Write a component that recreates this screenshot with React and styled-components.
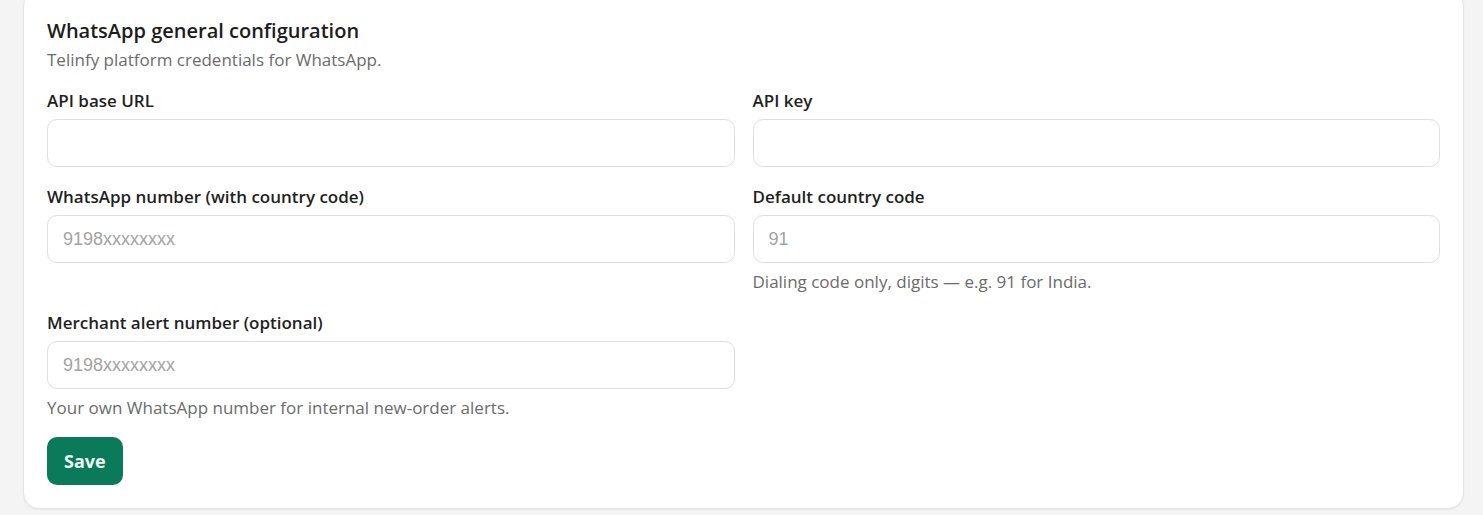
import React from "react";
import styled, { createGlobalStyle } from "styled-components";

const GlobalStyle = createGlobalStyle`
  html, body {
    margin: 0;
    padding: 0;
    background: #f4f4f4;
    font-family: "Open Sans", "Noto Sans", "Liberation Sans", sans-serif;
    color: #1f1f1f;
  }
`;

const Page = styled.div`
  padding: 0 19px 6px 23px;
  overflow: hidden;
`;

const Card = styled.section`
  margin-top: -10px;
  background: #ffffff;
  border: 1px solid #e4e4e4;
  border-radius: 16px;
  box-shadow: 0 1px 2px rgba(0, 0, 0, 0.06);
  padding: 28px 23px 23px;
  display: flex;
  flex-direction: column;
`;

const Title = styled.h2`
  margin: 0;
  font-size: 20px;
  line-height: 24px;
  font-weight: 600;
  color: #1c1c1c;
`;

const Subtitle = styled.p`
  margin: 7px 0 0;
  font-size: 17px;
  line-height: 20px;
  color: #6b6b6b;
`;

const FieldGrid = styled.div`
  display: grid;
  grid-template-columns: 1fr 1fr;
  column-gap: 18px;
  row-gap: 20px;
  margin-top: 21px;
`;

const Field = styled.div`
  display: flex;
  flex-direction: column;
`;

const Label = styled.label`
  font-size: 17px;
  line-height: 20px;
  font-weight: 600;
  color: #1f1f1f;
  margin-bottom: 8px;
`;

const Input = styled.input`
  box-sizing: border-box;
  height: 48px;
  width: 100%;
  padding: 0 15px;
  border: 1px solid #dedede;
  border-radius: 10px;
  background: #fff;
  font-family: "Liberation Sans", Arial, sans-serif;
  font-size: 18px;
  color: #1f1f1f;
  outline: none;

  &::placeholder {
    color: #a3a3a3;
  }
`;

const Help = styled.p`
  margin: 8px 0 0;
  font-size: 17px;
  line-height: 22px;
  color: #6b6b6b;
`;

const SaveButton = styled.button`
  align-self: flex-start;
  margin-top: 18px;
  height: 48px;
  padding: 0 17px;
  border: none;
  border-radius: 10px;
  background: #0b7a5b;
  color: #eef8f3;
  font-family: inherit;
  font-size: 18px;
  font-weight: 700;
  cursor: pointer;
`;

const App = () => {
  return (
    <>
      <GlobalStyle />
      <Page>
        <Card>
          <Title>WhatsApp general configuration</Title>
          <Subtitle>Telinfy platform credentials for WhatsApp.</Subtitle>
          <FieldGrid>
            <Field>
              <Label>API base URL</Label>
              <Input type="text" />
            </Field>
            <Field>
              <Label>API key</Label>
              <Input type="password" />
            </Field>
            <Field>
              <Label>WhatsApp number (with country code)</Label>
              <Input type="text" placeholder="9198xxxxxxxx" />
            </Field>
            <Field>
              <Label>Default country code</Label>
              <Input type="text" placeholder="91" />
              <Help>Dialing code only, digits — e.g. 91 for India.</Help>
            </Field>
            <Field>
              <Label>Merchant alert number (optional)</Label>
              <Input type="text" placeholder="9198xxxxxxxx" />
              <Help>Your own WhatsApp number for internal new-order alerts.</Help>
            </Field>
          </FieldGrid>
          <SaveButton>Save</SaveButton>
        </Card>
      </Page>
    </>
  );
};

export default App;
